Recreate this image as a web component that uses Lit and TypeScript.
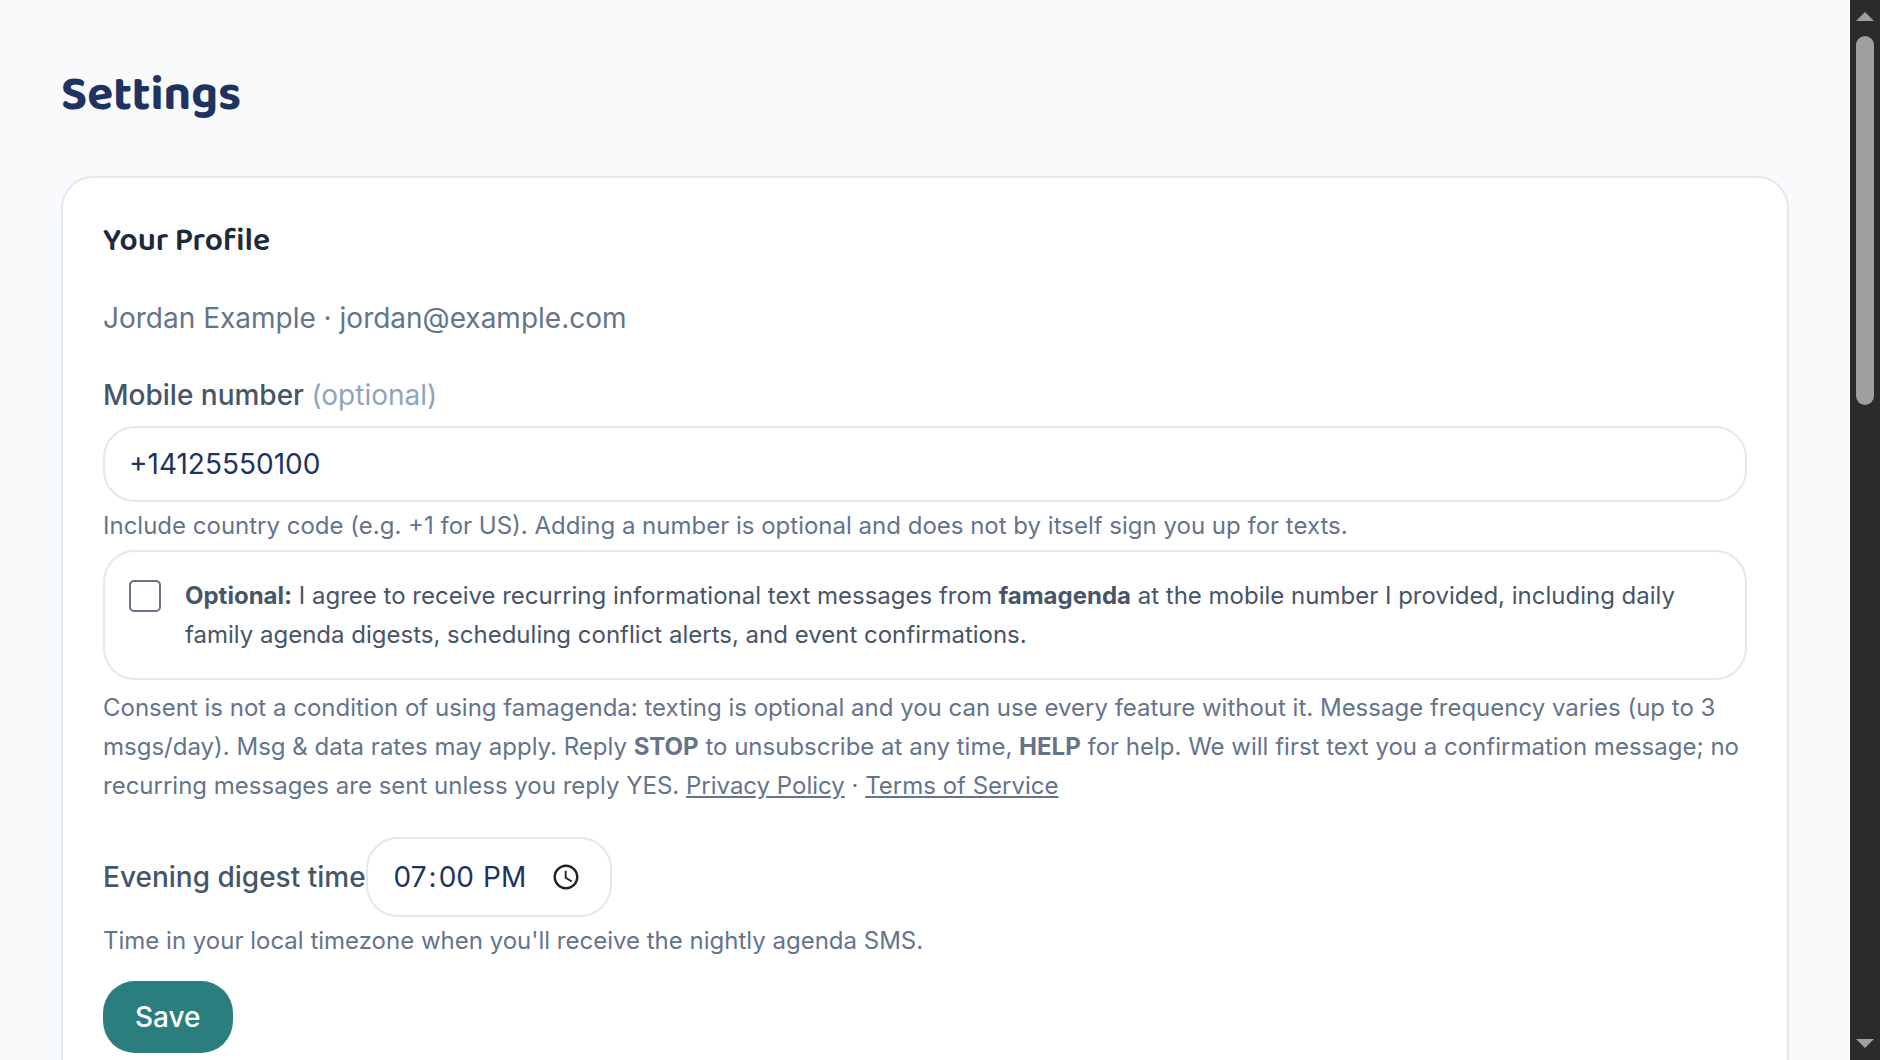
import { LitElement, html, css, svg } from "lit";
import { customElement, state } from "lit/decorators.js";

@customElement("settings-scrollbar")
class SettingsScrollbar extends LitElement {
  static styles = css`
    :host {
      display: flex;
      flex-direction: column;
      align-items: center;
      width: 30px;
      flex: none;
      background: #2b2b2b;
    }
    .arrow {
      display: block;
      width: 18px;
      height: 36px;
      flex: none;
      fill: #9f9f9f;
    }
    .track {
      flex: 1;
      width: 18px;
    }
    .thumb {
      height: 37.3%;
      border-radius: 9px;
      background: #9f9f9f;
    }
  `;

  render() {
    const arrow = (points: string) => html`
      <svg class="arrow" viewBox="0 0 18 36" aria-hidden="true">${svg`<polygon points=${points} />`}</svg>
    `;
    return html`
      ${arrow("9,12 18,21 0,21")}
      <div class="track"><div class="thumb"></div></div>
      ${arrow("0,15 18,15 9,24")}
    `;
  }
}

@customElement("app-root")
class AppRoot extends LitElement {
  @state() private phone = "+14125550100";
  @state() private digestTime = "19:00";
  @state() private consent = false;

  static styles = css`
    :host {
      display: flex;
      height: 100vh;
      background: #f8fafc;
      color: #1e335f;
      font-family: Inter, "Liberation Sans", sans-serif;
      font-size: 32px;
      line-height: 48px;
    }
    *,
    *::before {
      box-sizing: border-box;
    }
    .page {
      flex: 1;
      min-width: 0;
      overflow-y: auto;
      scrollbar-width: none;
    }
    .content {
      max-width: 1792px;
      margin: 0 auto;
      padding: 64px 32px;
    }
    h1,
    h2,
    p {
      margin: 0;
    }
    h1,
    h2 {
      font-family: "Baloo 2", "Noto Sans", "Open Sans", sans-serif;
    }
    h1 {
      margin-bottom: 48px;
      font-size: 48px;
      font-weight: 700;
      line-height: 64px;
    }
    .card {
      padding: 40px;
      border: 2px solid #e2e8f0;
      border-radius: 32px;
      background: #fff;
    }
    h2 {
      margin-bottom: 32px;
      color: #1e293b;
      font-size: 32px;
      font-weight: 600;
      line-height: 48px;
    }
    .account {
      color: #64748b;
      font-size: 28px;
      line-height: 40px;
    }
    .field {
      margin-top: 32px;
    }
    .label {
      color: #475569;
      font-size: 28px;
      font-weight: 500;
      line-height: 40px;
    }
    .muted {
      color: #90a5ba;
      font-weight: 400;
    }
    .input {
      border: 2px solid #e2e8f0;
      border-radius: 32px;
      padding: 16px 24px;
      background: #fff;
      color: #1e335f;
      font: 400 28px/40px Inter, "Liberation Sans", sans-serif;
    }
    .phone {
      display: block;
      width: 100%;
      height: 76px;
      margin-top: 8px;
    }
    .time {
      width: 246px;
      height: 80px;
    }
    .time::-webkit-datetime-edit-hour-field,
    .time::-webkit-datetime-edit-minute-field,
    .time::-webkit-datetime-edit-ampm-field {
      padding: 0 2px;
    }
    .time::-webkit-calendar-picker-indicator {
      margin-right: 2px;
      opacity: 0.87;
    }
    .hint {
      margin-top: 8px;
      color: #64748b;
      font-size: 24px;
      line-height: 32px;
    }
    .consent {
      display: flex;
      gap: 24px;
      margin-top: 8px;
      padding: 24px;
      border: 2px solid #e2e8f0;
      border-radius: 32px;
      color: #475569;
      font-size: 24px;
      line-height: 39px;
    }
    .check {
      appearance: none;
      flex: none;
      width: 32px;
      height: 32px;
      margin: 4px 0 0;
      border: 2px solid #6e6f84;
      border-radius: 5px;
      background: #fff;
    }
    .check:checked {
      background: #2a7f7e;
    }
    .terms {
      margin-top: 8px;
      color: #64748b;
      font-size: 24px;
      line-height: 39px;
    }
    .link {
      color: inherit;
      text-decoration: underline;
    }
    .save {
      display: block;
      margin-top: 24px;
      padding: 16px 32px;
      border: 0;
      border-radius: 32px;
      background: #2a7f7e;
      color: #fff;
      font: 500 28px/40px Inter, "Liberation Sans", sans-serif;
    }
  `;

  render() {
    return html`
      <main class="page">
        <div class="content">
          <h1>Settings</h1>
          <form class="card" @submit=${(e: Event) => e.preventDefault()}>
            <h2>Your Profile</h2>
            <p class="account">Jordan Example · jordan@example.com</p>

            <div class="field">
              <label class="label" for="phone">Mobile number <span class="muted">(optional)</span></label>
              <input
                class="input phone"
                id="phone"
                type="tel"
                .value=${this.phone}
                @input=${(e: Event) => (this.phone = (e.target as HTMLInputElement).value)}
              />
            </div>
            <p class="hint">
              Include country code (e.g. +1 for US). Adding a number is optional and does not by itself sign you up for texts.
            </p>

            <label class="consent">
              <input
                class="check"
                type="checkbox"
                .checked=${this.consent}
                @change=${(e: Event) => (this.consent = (e.target as HTMLInputElement).checked)}
              />
              <span>
                <strong>Optional:</strong> I agree to receive recurring informational text messages from
                <strong>famagenda</strong> at the mobile number I provided, including daily family agenda digests,
                scheduling conflict alerts, and event confirmations.
              </span>
            </label>
            <p class="terms">
              Consent is not a condition of using famagenda: texting is optional and you can use every feature without it.
              Message frequency varies (up to 3 msgs/day). Msg &amp; data rates may apply. Reply <strong>STOP</strong> to
              unsubscribe at any time, <strong>HELP</strong> for help. We will first text you a confirmation message; no
              recurring messages are sent unless you reply YES. <a class="link" href="#privacy">Privacy Policy</a> ·
              <a class="link" href="#terms">Terms of Service</a>
            </p>

            <div class="field">
              <label class="label" for="digest">Evening digest time</label
              ><input
                class="input time"
                id="digest"
                type="time"
                .value=${this.digestTime}
                @input=${(e: Event) => (this.digestTime = (e.target as HTMLInputElement).value)}
              />
            </div>
            <p class="hint">Time in your local timezone when you'll receive the nightly agenda SMS.</p>
            <button class="save" type="submit">Save</button>
          </form>
        </div>
      </main>
      <settings-scrollbar></settings-scrollbar>
    `;
  }
}
